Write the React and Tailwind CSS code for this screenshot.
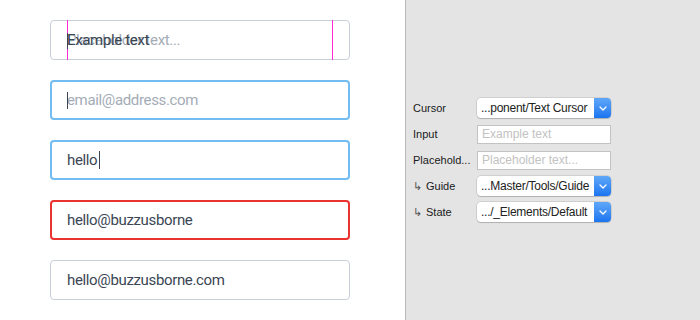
import React from "react";

const font = { fontFamily: "Roboto, 'Noto Sans', sans-serif" };

function Chevron() {
  return (
    <svg width="8" height="5" viewBox="0 0 8 5" fill="none">
      <path d="M1 1l3 3 3-3" stroke="white" strokeWidth="1.3" strokeLinecap="round" strokeLinejoin="round" />
    </svg>
  );
}

function Dropdown({ value }) {
  return (
    <div className="flex h-[20px] w-[134px] rounded-[4px] bg-white shadow-[0_0_0_0.5px_rgba(0,0,0,0.18),0_1px_1px_rgba(0,0,0,0.15)]">
      <div className="flex-1 overflow-hidden whitespace-nowrap pl-[4px] text-[12px] leading-[20px] tracking-[-0.25px] text-[#222]">{value}</div>
      <div className="flex w-[17px] items-center justify-center rounded-r-[4px] bg-gradient-to-b from-[#5fa8f8] to-[#1a74f0]">
        <Chevron />
      </div>
    </div>
  );
}

function Field({ placeholder }) {
  return (
    <div className="mt-[1px] h-[19px] w-[134px] border border-[#c3c3c3] bg-white pl-[4px] text-[12px] leading-[17px] text-[#c2c2c2] whitespace-nowrap overflow-hidden">
      {placeholder}
    </div>
  );
}

function Row({ label, arrow, children }) {
  return (
    <div className="flex h-[20px] items-center">
      <div className="w-[64px] whitespace-nowrap text-[11px] text-[#1a1a1a]">
        {arrow && <span className="mr-[4px] text-[#555]">↳</span>}
        {label}
      </div>
      {children}
    </div>
  );
}

export default function App() {
  const caret = "absolute w-[1px] bg-[#3b4652]";
  const t = "text-[15px] leading-[20px] tracking-[-0.35px]";
  return (
    <div className="flex h-[320px] w-[700px]" style={font}>
      <div className="flex w-[405px] flex-col gap-[20px] bg-white pl-[50px] pt-[20px]">
        <div className="relative h-[40px] w-[300px] rounded-[4px] border border-[#c7cfd8]">
          <div className="absolute left-[16px] top-[-1px] h-[40px] w-[1px] bg-[#ff2ad4]" />
          <div className="absolute left-[281px] top-[-1px] h-[40px] w-[1px] bg-[#ff2ad4]" />
          <span className={"absolute left-[16px] top-[9px] text-[#a4acb6] " + t}>Placeholder text...</span>
          <span className={"absolute left-[16px] top-[9px] text-[#3a4653] " + t}>Example text</span>
          <div className={caret + " left-[16px] top-[12px] h-[16px]"} />
        </div>
        <div className="relative h-[40px] w-[300px] rounded-[4px] border-2 border-[#73bdf2]">
          <span className={"absolute left-[15px] top-[8px] text-[#a4acb6] " + t}>email@address.com</span>
          <div className={caret + " left-[15px] top-[10px] h-[17px]"} />
        </div>
        <div className="relative flex h-[40px] w-[300px] items-center rounded-[4px] border-2 border-[#73bdf2] pl-[15px]">
          <span className={"text-[#3a4653] " + t}>hello</span>
          <div className="ml-[2px] h-[18px] w-[1px] bg-[#3b4652]" />
        </div>
        <div className="flex h-[40px] w-[300px] items-center rounded-[4px] border-2 border-[#e8332f] pl-[15px]">
          <span className={"text-[#3a4653] " + t}>hello@buzzusborne</span>
        </div>
        <div className="flex h-[40px] w-[300px] items-center rounded-[4px] border border-[#c7cfd8] pl-[16px]">
          <span className={"text-[#3a4653] " + t}>hello@buzzusborne.com</span>
        </div>
      </div>
      <div className="w-[1px] bg-[#b8b8b8]" />
      <div className="flex flex-1 flex-col gap-[6px] bg-[#e4e4e4] pl-[7px] pt-[98px]" style={{ fontFamily: "'Liberation Sans', Arial, sans-serif" }}>
        <Row label="Cursor"><Dropdown value="...ponent/Text Cursor" /></Row>
        <Row label="Input"><Field placeholder="Example text" /></Row>
        <Row label="Placehold..."><Field placeholder="Placeholder text..." /></Row>
        <Row label="Guide" arrow><Dropdown value="...Master/Tools/Guide" /></Row>
        <Row label="State" arrow><Dropdown value=".../_Elements/Default" /></Row>
      </div>
    </div>
  );
}
